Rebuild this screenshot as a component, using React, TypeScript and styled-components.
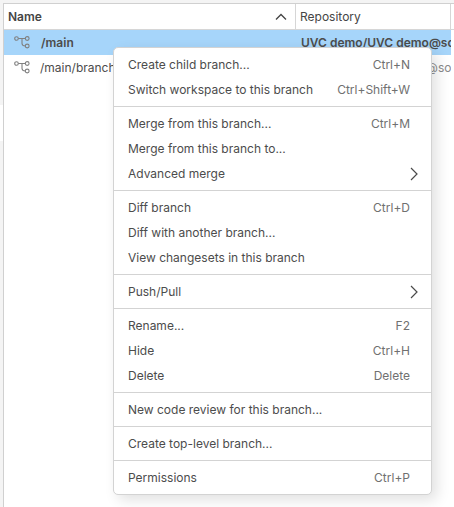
import React from "react";
import styled, { createGlobalStyle } from "styled-components";

const Global = createGlobalStyle`
  *{box-sizing:border-box}
  body{margin:0;background:#fff;font-family:Inter,"Liberation Sans",sans-serif;font-size:12px;color:#4c4c4c;overflow:hidden}
`;

const Page = styled.div`
  position: relative;
  display: flex;
  width: 454px;
  height: 507px;
  padding-top: 3px;
  background: #f4f4f4;
  overflow: hidden;
`;

const Rail = styled.div`
  width: 3px;
  flex: none;
  padding-top: 102px;
`;

const RailTab = styled.div`
  height: 36px;
  background: #fff;
`;

const Panel = styled.div`
  flex: 1;
  min-width: 0;
  background: #fff;
  border-left: 1px solid #d0d0d0;
  border-top: 1px solid #d0d0d0;
`;

const Header = styled.div`
  display: grid;
  grid-template-columns: 292px 155px 1fr;
  height: 26px;
  border-bottom: 1px solid #d6d6d6;
`;

const HeaderCell = styled.div<{ $bold?: boolean }>`
  display: flex;
  align-items: center;
  justify-content: space-between;
  padding: 0 8px 0 4px;
  border-right: 1px solid #d6d6d6;
  font-weight: ${(p) => (p.$bold ? 600 : 400)};
  color: #454545;
  &:last-child { border-right: 0; }
`;

const Row = styled.div<{ $selected?: boolean }>`
  display: grid;
  grid-template-columns: 292px 155px;
  width: 447px;
  height: 25px;
  background: ${(p) => (p.$selected ? "#a6d5fa" : "#fff")};
  font-weight: ${(p) => (p.$selected ? 600 : 400)};
`;

const Cell = styled.div<{ $muted?: boolean; $left: number }>`
  display: flex;
  align-items: center;
  padding-left: ${(p) => p.$left}px;
  overflow: hidden;
  white-space: nowrap;
  color: ${(p) => (p.$muted ? "#8a8a8a" : "inherit")};
`;

const IconSlot = styled.span<{ $gap: number }>`
  display: flex;
  width: 16px;
  margin: -2px ${(p) => p.$gap}px 0 0;
`;

const Menu = styled.div`
  position: absolute;
  left: 113px;
  top: 47px;
  width: 319px;
  background: #fff;
  border: 1px solid #d3d3d3;
  border-radius: 5px;
  box-shadow: 5px 5px 14px rgba(0, 0, 0, 0.12);
`;

const Group = styled.div`
  padding: 4px 0;
  & + & { border-top: 1px solid #d3d3d3; }
`;

const Item = styled.div<{ $submenu?: boolean }>`
  display: flex;
  align-items: center;
  justify-content: space-between;
  height: 25px;
  padding: 0 ${(p) => (p.$submenu ? 13 : 21)}px 0 14px;
  white-space: nowrap;
`;

const Shortcut = styled.span`
  color: #707070;
`;

const BranchIcon = () => (
  <svg width="16" height="14" viewBox="0 0 16 14" fill="none" stroke="#808080" strokeWidth="1.1">
    <circle cx="2.5" cy="3.5" r="1.8" />
    <circle cx="13.2" cy="3.5" r="1.9" />
    <circle cx="13.2" cy="11" r="1.9" />
    <path d="M4.3 3.5H11.3M8 3.5V8.5Q8.2 11 11.3 11" />
  </svg>
);

const SortIcon = () => (
  <svg width="12" height="8" viewBox="0 0 12 8" fill="none" stroke="#444" strokeWidth="1.3">
    <path d="M1 6.5L6 1.5L11 6.5" />
  </svg>
);

const SubmenuIcon = () => (
  <svg width="8" height="14" viewBox="0 0 8 14" fill="none" stroke="#4a4a4a" strokeWidth="1.2">
    <path d="M1 1L7 7L1 13" />
  </svg>
);

type Entry = { label: string; keys?: string; submenu?: boolean };

const groups: Entry[][] = [
  [
    { label: "Create child branch...", keys: "Ctrl+N" },
    { label: "Switch workspace to this branch", keys: "Ctrl+Shift+W" },
  ],
  [
    { label: "Merge from this branch...", keys: "Ctrl+M" },
    { label: "Merge from this branch to..." },
    { label: "Advanced merge", submenu: true },
  ],
  [
    { label: "Diff branch", keys: "Ctrl+D" },
    { label: "Diff with another branch..." },
    { label: "View changesets in this branch" },
  ],
  [{ label: "Push/Pull", submenu: true }],
  [
    { label: "Rename...", keys: "F2" },
    { label: "Hide", keys: "Ctrl+H" },
    { label: "Delete", keys: "Delete" },
  ],
  [{ label: "New code review for this branch..." }],
  [{ label: "Create top-level branch..." }],
  [{ label: "Permissions", keys: "Ctrl+P" }],
];

export default function App() {
  return (
    <Page>
      <Global />
      <Rail>
        <RailTab />
      </Rail>
      <Panel>
        <Header>
          <HeaderCell $bold>
            Name
            <SortIcon />
          </HeaderCell>
          <HeaderCell>Repository</HeaderCell>
          <HeaderCell />
        </Header>
        <Row $selected>
          <Cell $left={10}>
            <IconSlot $gap={11}><BranchIcon /></IconSlot>
            /main
          </Cell>
          <Cell $left={5}>UVC demo/UVC demo@so</Cell>
        </Row>
        <Row>
          <Cell $left={10}>
            <IconSlot $gap={10}><BranchIcon /></IconSlot>
            /main/branch
          </Cell>
          <Cell $left={4} $muted>UVC demo/UVC demo@so</Cell>
        </Row>
      </Panel>
      <Menu>
        {groups.map((group) => (
          <Group key={group[0].label}>
            {group.map((item) => (
              <Item key={item.label} $submenu={item.submenu}>
                <span>{item.label}</span>
                {item.keys && <Shortcut>{item.keys}</Shortcut>}
                {item.submenu && <SubmenuIcon />}
              </Item>
            ))}
          </Group>
        ))}
      </Menu>
    </Page>
  );
}
